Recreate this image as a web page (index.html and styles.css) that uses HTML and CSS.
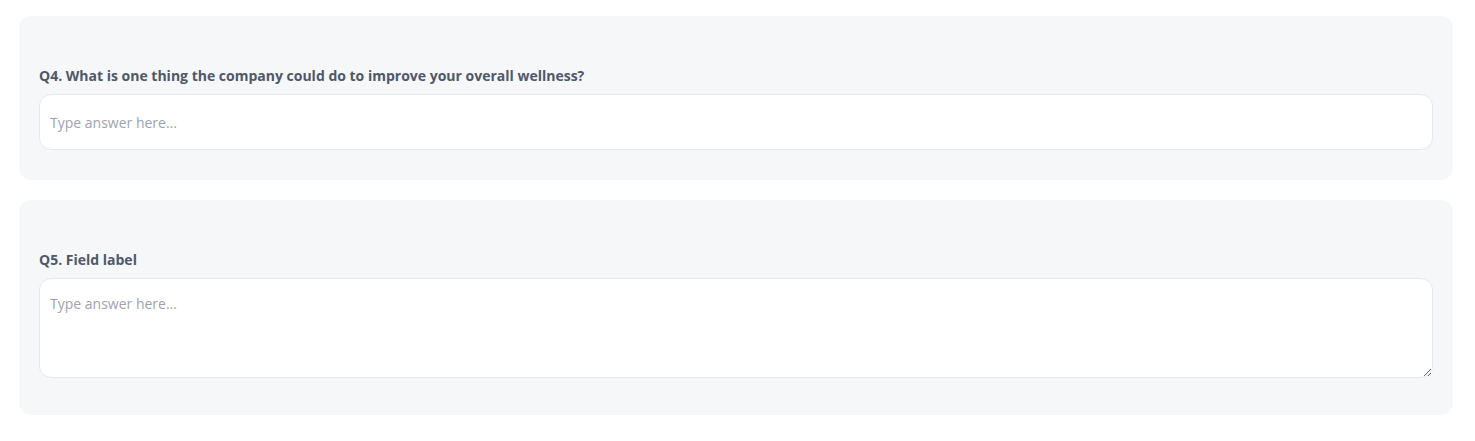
FILE: index.html
```html
<!DOCTYPE html>
<html lang="en">
<head>
  <meta charset="UTF-8" />
  <meta name="viewport" content="width=device-width, initial-scale=1.0"/>
  <title>Wellness Survey</title>
  <link rel="stylesheet" href="styles.css">
</head>
<body>

<div class="survey">
  <!-- Q4: single line answer -->
  <div class="question-card">
    <label class="question-label" for="q4">Q4. What is one thing the company could do to improve your overall wellness?</label>
    <input type="text" id="q4" class="answer-input" placeholder="Type answer here..." />
  </div>

  <!-- Q5: long answer -->
  <div class="question-card">
    <label class="question-label" for="q5">Q5. Field label</label>
    <textarea id="q5" class="answer-textarea" placeholder="Type answer here..."></textarea>
  </div>
</div>

</body>
</html>
```

FILE: styles.css
```css
body {
  margin: 0;
  font-family: "Open Sans", "Noto Sans", sans-serif;
  background-color: #ffffff;
}

.survey {
  width: 1434px;
  padding: 16px 0 0 19px;
  display: flex;
  flex-direction: column;
  gap: 20px;
}

.question-card {
  background: #f6f7f9;
  border-radius: 12px;
  padding: 50px 20px 30px;
}

.question-label {
  display: block;
  font-size: 14px;
  line-height: 20px;
  font-weight: 700;
  color: #4d586b;
  margin-bottom: 8px;
}

.answer-input,
.answer-textarea {
  display: block;
  width: 100%;
  box-sizing: border-box;
  border: 1px solid #e5e7eb;
  border-radius: 12px;
  background: #ffffff;
  font-family: inherit;
  font-size: 14px;
  line-height: 20px;
  color: #374151;
  outline: none;
}

.answer-input {
  height: 56px;
  padding: 0 10px;
}

.answer-textarea {
  height: 100px;
  padding: 15px 10px;
  resize: vertical;
  margin-bottom: 7px;
}

.answer-input::placeholder,
.answer-textarea::placeholder {
  color: #9ca3af;
}
```
